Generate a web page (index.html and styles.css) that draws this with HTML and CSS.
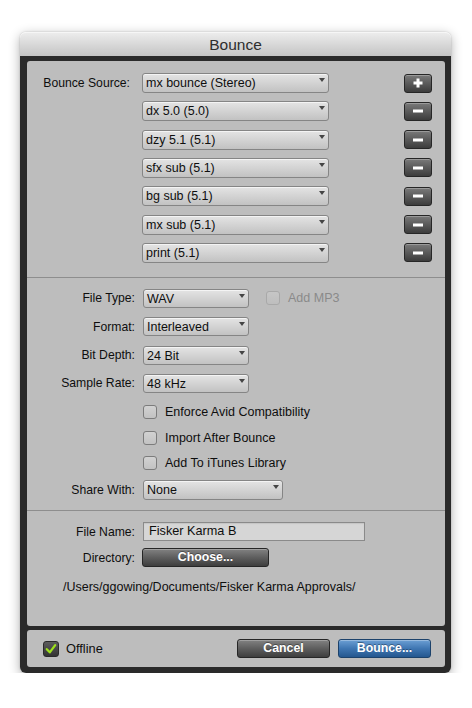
FILE: index.html
```html
<!DOCTYPE html>
<html>
<head>
<meta charset="utf-8">
<title>Bounce</title>
<link rel="stylesheet" href="styles.css">
</head>
<body>
<div class="window">
  <div class="titlebar">Bounce</div>
  <div class="frame">
    <div class="panel">
      <section class="sec sources">
        <div class="src-row">
          <span class="label src-label">Bounce Source:</span>
          <div class="popup src-popup"><span class="ptext">mx bounce (Stereo)</span><i class="arrow"></i></div>
          <button class="pm"><svg width="10" height="10" viewBox="0 0 10 10"><rect x="3.5" y="0.5" width="3" height="9" fill="#fff"/><rect x="0.5" y="3.5" width="9" height="3" fill="#fff"/></svg></button>
        </div>
        <div class="src-row">
          <span class="label src-label"></span>
          <div class="popup src-popup"><span class="ptext">dx 5.0 (5.0)</span><i class="arrow"></i></div>
          <button class="pm"><svg width="10" height="10" viewBox="0 0 10 10"><rect x="0" y="3.5" width="10" height="3" fill="#fff"/></svg></button>
        </div>
        <div class="src-row">
          <span class="label src-label"></span>
          <div class="popup src-popup"><span class="ptext">dzy 5.1 (5.1)</span><i class="arrow"></i></div>
          <button class="pm"><svg width="10" height="10" viewBox="0 0 10 10"><rect x="0" y="3.5" width="10" height="3" fill="#fff"/></svg></button>
        </div>
        <div class="src-row">
          <span class="label src-label"></span>
          <div class="popup src-popup"><span class="ptext">sfx sub (5.1)</span><i class="arrow"></i></div>
          <button class="pm"><svg width="10" height="10" viewBox="0 0 10 10"><rect x="0" y="3.5" width="10" height="3" fill="#fff"/></svg></button>
        </div>
        <div class="src-row">
          <span class="label src-label"></span>
          <div class="popup src-popup"><span class="ptext">bg sub (5.1)</span><i class="arrow"></i></div>
          <button class="pm"><svg width="10" height="10" viewBox="0 0 10 10"><rect x="0" y="3.5" width="10" height="3" fill="#fff"/></svg></button>
        </div>
        <div class="src-row">
          <span class="label src-label"></span>
          <div class="popup src-popup"><span class="ptext">mx sub (5.1)</span><i class="arrow"></i></div>
          <button class="pm"><svg width="10" height="10" viewBox="0 0 10 10"><rect x="0" y="3.5" width="10" height="3" fill="#fff"/></svg></button>
        </div>
        <div class="src-row">
          <span class="label src-label"></span>
          <div class="popup src-popup"><span class="ptext">print (5.1)</span><i class="arrow"></i></div>
          <button class="pm"><svg width="10" height="10" viewBox="0 0 10 10"><rect x="0" y="3.5" width="10" height="3" fill="#fff"/></svg></button>
        </div>
      </section>

      <section class="sec format">
        <div class="frow">
          <span class="label">File Type:</span>
          <div class="popup fmt-popup"><span class="ptext">WAV</span><i class="arrow"></i></div>
          <span class="check disabled mp3"></span>
          <span class="ctext disabled-text">Add MP3</span>
        </div>
        <div class="frow">
          <span class="label">Format:</span>
          <div class="popup fmt-popup"><span class="ptext">Interleaved</span><i class="arrow"></i></div>
        </div>
        <div class="frow">
          <span class="label">Bit Depth:</span>
          <div class="popup fmt-popup"><span class="ptext">24 Bit</span><i class="arrow"></i></div>
        </div>
        <div class="frow">
          <span class="label">Sample Rate:</span>
          <div class="popup fmt-popup"><span class="ptext">48 kHz</span><i class="arrow"></i></div>
        </div>
        <div class="crow first">
          <span class="label"></span>
          <span class="check"></span>
          <span class="ctext">Enforce Avid Compatibility</span>
        </div>
        <div class="crow">
          <span class="label"></span>
          <span class="check"></span>
          <span class="ctext">Import After Bounce</span>
        </div>
        <div class="crow">
          <span class="label"></span>
          <span class="check"></span>
          <span class="ctext">Add To iTunes Library</span>
        </div>
        <div class="frow share">
          <span class="label">Share With:</span>
          <div class="popup share-popup"><span class="ptext">None</span><i class="arrow"></i></div>
        </div>
      </section>

      <section class="sec output">
        <div class="frow">
          <span class="label">File Name:</span>
          <div class="textfield">Fisker Karma B</div>
        </div>
        <div class="frow dir">
          <span class="label">Directory:</span>
          <button class="btn dark choose">Choose...</button>
        </div>
        <div class="path">/Users/ggowing/Documents/Fisker Karma Approvals/</div>
      </section>
    </div>

    <div class="bottombar">
      <span class="offline-check"><svg width="16" height="16" viewBox="0 0 16 16"><path d="M3.2 8.2 L6.6 11.8 L12.8 3.6" fill="none" stroke="#9ee21c" stroke-width="2.6" stroke-linecap="round" stroke-linejoin="round"/></svg></span>
      <span class="offline-text">Offline</span>
      <button class="btn dark cancel">Cancel</button>
      <button class="btn blue bounce">Bounce...</button>
    </div>
  </div>
</div>
</body>
</html>
```

FILE: styles.css
```css
* { box-sizing: border-box; }

html, body {
  margin: 0;
  padding: 0;
  background: #ffffff;
}

body {
  font-family: "Liberation Sans", Arial, sans-serif;
  font-size: 12.2px;
  color: #0e0e0e;
  padding: 32px 0 0 20px;
}

.window {
  width: 431px;
  border-radius: 6px 6px 6px 6px;
  box-shadow: 0 3px 12px rgba(0, 0, 0, 0.32), 0 0 2px rgba(0, 0, 0, 0.2);
}

.titlebar {
  height: 24px;
  border-radius: 6px 6px 0 0;
  background: linear-gradient(#ececec, #dadada 45%, #c4c4c4);
  border-top: 1px solid #f6f6f6;
  text-align: center;
  font-size: 15.5px;
  line-height: 23px;
  color: #2e2e2e;
}

.frame {
  background: #2a2a2a;
  padding: 5px 6px 6px 7px;
  border-radius: 0 0 6px 6px;
}

.panel {
  background: #bdbdbd;
  border-radius: 3px;
  height: 565px;
  display: flex;
  flex-direction: column;
}

.sec {
  display: flex;
  flex-direction: column;
}

.sources {
  padding: 12px 13px 14px 0;
  gap: 8.33px;
}

.format {
  border-top: 1px solid #8e8e8e;
  padding: 11px 0 10px 0;
}

.output {
  border-top: 1px solid #8e8e8e;
  padding: 11px 0 0 0;
  flex: 1;
}

.src-row {
  display: flex;
  align-items: center;
  height: 20px;
}

.label {
  flex: none;
  width: 108px;
  text-align: right;
  margin-right: 8px;
  white-space: nowrap;
}

.src-label {
  width: 103px;
  margin-right: 12px;
}

.popup {
  height: 19px;
  display: flex;
  justify-content: space-between;
  border: 1px solid #858585;
  border-radius: 3px;
  background: linear-gradient(#e4e4e4, #d3d3d3 50%, #c2c2c2);
  box-shadow: inset 0 1px 0 rgba(255, 255, 255, 0.6);
  padding-left: 3px;
}

.ptext {
  line-height: 18px;
  font-size: 12.5px;
  color: #0e0e0e;
  white-space: nowrap;
}

.arrow {
  flex: none;
  align-self: flex-start;
  margin-top: 4px;
  margin-right: 3px;
  width: 0;
  height: 0;
  border-left: 3.5px solid transparent;
  border-right: 3.5px solid transparent;
  border-top: 4px solid #454545;
}

.src-popup {
  width: 187px;
  height: 20px;
}

.src-popup .ptext { line-height: 19px; }

.pm {
  margin-left: auto;
  width: 28px;
  height: 19px;
  padding: 0;
  border: 1px solid #262626;
  border-radius: 3px;
  background: linear-gradient(#7a7a7a, #5a5a5a 50%, #3c3c3c);
  box-shadow: inset 0 1px 0 rgba(255, 255, 255, 0.25);
  display: flex;
  align-items: center;
  justify-content: center;
}

.pm svg { display: block; }

.frow {
  display: flex;
  align-items: center;
  height: 19px;
  margin-bottom: 9.3px;
}

.fmt-popup { width: 106px; }

.share { margin-bottom: 0; margin-top: 10px; height: 20px; }

.share-popup { width: 140px; height: 20px; }

.check {
  flex: none;
  width: 14px;
  height: 14px;
  border: 1px solid #7c7c7c;
  border-radius: 3px;
  background: linear-gradient(#d2d2d2, #c2c2c2);
  margin-right: 8px;
}

.check.disabled {
  border-color: #a9a9a9;
  background: linear-gradient(#c6c6c6, #bebebe);
}

.mp3 { margin-left: 17px; }

.ctext {
  white-space: nowrap;
  line-height: 14px;
  font-size: 12.5px;
}

.disabled-text { color: #8a8a8a; }

.crow {
  display: flex;
  align-items: center;
  height: 14px;
  margin-top: 11.5px;
}

.crow.first { margin-top: 3px; }

.textfield {
  width: 222px;
  height: 19px;
  border: 1px solid #8a8a8a;
  background: #d6d6d6;
  padding-left: 5px;
  line-height: 17px;
  font-size: 12.7px;
  box-shadow: inset 0 1px 1px rgba(0, 0, 0, 0.08);
}

.output .frow { margin-bottom: 7px; }

.dir .label { margin-right: 7px; }

.btn {
  height: 19px;
  padding: 0;
  font-family: "Liberation Sans", Arial, sans-serif;
  font-size: 12.3px;
  font-weight: bold;
  color: #ffffff;
  border-radius: 3px;
  text-shadow: 0 -1px 0 rgba(0, 0, 0, 0.35);
  line-height: 17px;
}

.btn.dark {
  border: 1px solid #262626;
  background: linear-gradient(#828282, #5e5e5e 50%, #3e3e3e);
  box-shadow: inset 0 1px 0 rgba(255, 255, 255, 0.25);
}

.btn.blue {
  border: 1px solid #1c426b;
  background: linear-gradient(#6c9fd4, #3f76b2 50%, #24578f);
  box-shadow: inset 0 1px 0 rgba(255, 255, 255, 0.3);
}

.choose { width: 127px; }

.path {
  margin: 6px 0 0 36px;
  line-height: 14px;
  font-size: 12.5px;
  white-space: nowrap;
}

.bottombar {
  margin-top: 4px;
  height: 37px;
  background: #bdbdbd;
  border-radius: 3px;
  display: flex;
  align-items: center;
  padding: 0 14px 0 16px;
}

.offline-check {
  flex: none;
  width: 16px;
  height: 16px;
  border-radius: 3px;
  background: linear-gradient(#5c5c5c, #333333);
  border: 1px solid #2a2a2a;
  display: flex;
  align-items: center;
  justify-content: center;
  margin-top: 1px;
}

.offline-check svg { display: block; }

.offline-text {
  margin-left: 7px;
  font-size: 12.8px;
}

.cancel {
  margin-left: auto;
  width: 93px;
}

.bounce {
  margin-left: 8px;
  width: 93px;
}
```
